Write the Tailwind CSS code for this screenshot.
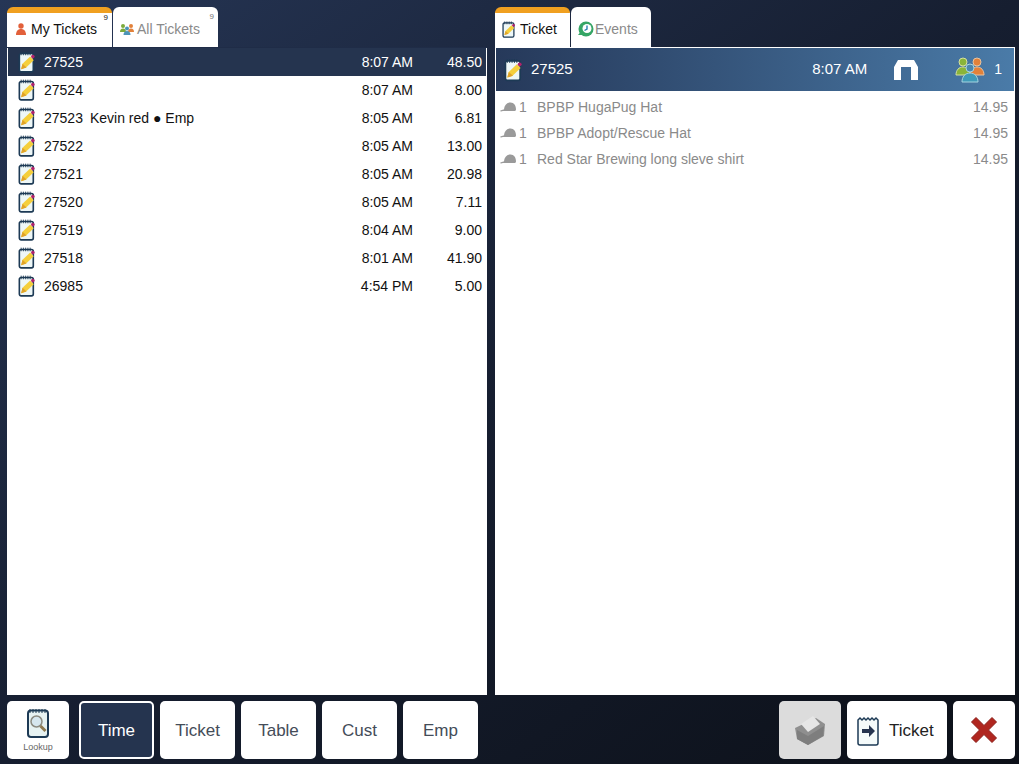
<!DOCTYPE html>
<html><head><meta charset="utf-8"><script src="https://cdn.jsdelivr.net/npm/@tailwindcss/browser@4"></script></head>
<body class="m-0">
<svg width="0" height="0" class="absolute">
<defs>
<symbol id="note" viewBox="0 0 20 24">
<rect x="1.500" y="2.500" width="15.500" height="20.500" rx="2" fill="#eef7f7" stroke="#1d3a55" stroke-width="1.800"/>
<path d="M3.500 .5v4M6 .5v4M8.500 .5v4M11 .5v4M13.500 .5v4" stroke="#1d3a55" stroke-width="1"/>
<path d="M3.500 20l1.500-6 8.500-8 4 4-8.500 8z" fill="#f5cf3c"/>
<path d="M3.500 20l1.500-6 4.500 4z" fill="#e0a32a"/>
<circle cx="16.500" cy="6" r="2" fill="#b0226a"/>
</symbol>
<symbol id="hat" viewBox="0 0 16 10">
<path d="M0 9c1-1 3-1.500 4-1.500C4.500 3 7 .5 10.500 .5S16 3.500 16 7.500c0 1-1 1.500-2 1.500H3C1.500 9.500 .5 9.500 0 9z" fill="#9a9a9a"/>
</symbol>
</defs>
</svg>
<div class="w-[1019px] h-[764px] overflow-hidden flex flex-col bg-gradient-to-br from-[#263656] via-[#161e30] to-[#0c1018] font-['Liberation_Sans',Arial,sans-serif] pt-[7px] pb-[5px]">
<div class="flex-1 flex min-h-0 pl-[7px] pr-[4px] gap-[8px]">
  <!-- left -->
  <div class="w-[480px] flex flex-col">
    <div class="flex h-[40px] gap-[1px]">
      <div class="relative w-[105px] bg-white rounded-t-[6px] border-t-[6px] border-[#f0a020] flex items-center pl-[9px] pb-[2px] text-[14px] text-[#111] gap-[5px]">
        <svg width="10" height="12" viewBox="0 0 10 12" class="shrink-0"><circle cx="5" cy="3" r="2.700" fill="#e2603a"/><path d="M0 12c0-4 2-6 5-6s5 2 5 6z" fill="#e2603a"/></svg>
        <span>My Tickets</span>
        <span class="absolute top-[1px] right-[4px] text-[8px] leading-[8px] text-[#222]">9</span>
      </div>
      <div class="relative w-[105px] bg-white rounded-t-[6px] flex items-center pl-[7px] pt-[4px] text-[14px] text-[#8a8a8a] gap-[3px]">
        <svg width="14" height="12" viewBox="0 0 14 12" class="shrink-0"><circle cx="3" cy="3" r="2" fill="#7cab3c"/><circle cx="11" cy="3" r="2" fill="#e2813a"/><path d="M0 9c0-2 1-3.500 3-3.500S6 7 6 9z" fill="#7cab3c"/><path d="M8 9c0-2 1-3.500 3-3.500S14 7 14 9z" fill="#e2813a"/><circle cx="7" cy="5.500" r="2" fill="#4d94b8"/><path d="M3.500 12c0-2.500 1.500-4 3.500-4s3.500 1.500 3.500 4z" fill="#4d94b8"/></svg>
        <span>All Tickets</span>
        <span class="absolute top-[6px] right-[4px] text-[8px] leading-[8px] text-[#777]">9</span>
      </div>
    </div>
    <div class="flex-1 bg-white border-t border-[#1f2c47] text-[14px] text-[#111]">
      <div class="h-[28px] flex items-center bg-[#25344f] text-white ml-px mr-px pl-[10px] pr-[4px]"><svg width="18" height="22" class="mr-[8px] shrink-0"><use href="#note"/></svg><span>27525</span><span class="ml-auto">8:07 AM</span><span class="w-[69px] text-right">48.50</span></div>
      <div class="h-[28px] flex items-center pl-[11px] pr-[5px]"><svg width="18" height="22" class="mr-[8px] shrink-0"><use href="#note"/></svg><span>27524</span><span class="ml-auto">8:07 AM</span><span class="w-[69px] text-right">8.00</span></div>
      <div class="h-[28px] flex items-center pl-[11px] pr-[5px]"><svg width="18" height="22" class="mr-[8px] shrink-0"><use href="#note"/></svg><span>27523</span><span class="ml-[7px]">Kevin red ● Emp</span><span class="ml-auto">8:05 AM</span><span class="w-[69px] text-right">6.81</span></div>
      <div class="h-[28px] flex items-center pl-[11px] pr-[5px]"><svg width="18" height="22" class="mr-[8px] shrink-0"><use href="#note"/></svg><span>27522</span><span class="ml-auto">8:05 AM</span><span class="w-[69px] text-right">13.00</span></div>
      <div class="h-[28px] flex items-center pl-[11px] pr-[5px]"><svg width="18" height="22" class="mr-[8px] shrink-0"><use href="#note"/></svg><span>27521</span><span class="ml-auto">8:05 AM</span><span class="w-[69px] text-right">20.98</span></div>
      <div class="h-[28px] flex items-center pl-[11px] pr-[5px]"><svg width="18" height="22" class="mr-[8px] shrink-0"><use href="#note"/></svg><span>27520</span><span class="ml-auto">8:05 AM</span><span class="w-[69px] text-right">7.11</span></div>
      <div class="h-[28px] flex items-center pl-[11px] pr-[5px]"><svg width="18" height="22" class="mr-[8px] shrink-0"><use href="#note"/></svg><span>27519</span><span class="ml-auto">8:04 AM</span><span class="w-[69px] text-right">9.00</span></div>
      <div class="h-[28px] flex items-center pl-[11px] pr-[5px]"><svg width="18" height="22" class="mr-[8px] shrink-0"><use href="#note"/></svg><span>27518</span><span class="ml-auto">8:01 AM</span><span class="w-[69px] text-right">41.90</span></div>
      <div class="h-[28px] flex items-center pl-[11px] pr-[5px]"><svg width="18" height="22" class="mr-[8px] shrink-0"><use href="#note"/></svg><span>26985</span><span class="ml-auto">4:54 PM</span><span class="w-[69px] text-right">5.00</span></div>
    </div>
  </div>
  <!-- right -->
  <div class="w-[520px] flex flex-col">
    <div class="flex h-[40px] gap-[1px]">
      <div class="w-[75px] bg-white rounded-t-[6px] border-t-[6px] border-[#f0a020] flex items-center pl-[7px] pb-[2px] text-[14px] text-[#111] gap-[4px]">
        <svg width="14" height="17" class="shrink-0"><use href="#note"/></svg><span>Ticket</span>
      </div>
      <div class="w-[80px] bg-white rounded-t-[6px] flex items-center pl-[7px] pt-[4px] text-[14px] text-[#8a8a8a] gap-[1px]">
        <svg width="16" height="16" viewBox="0 0 16 16" class="shrink-0"><circle cx="8" cy="8" r="7.500" fill="#35a565"/><circle cx="9" cy="7.500" r="4.500" fill="#fff"/><path d="M9 4.500v3.500l-2.500 1.500" stroke="#2a7fb0" stroke-width="1.400" fill="none"/><path d="M0 14l4-5 3 5z" fill="#35a565"/></svg>
        <span>Events</span>
      </div>
    </div>
    <div class="flex-1 bg-white border-t border-white text-[#8a8a8a] text-[14px]">
      <div class="h-[43px] flex items-center bg-gradient-to-r from-[#26395a] to-[#4a7ba8] text-white mx-px pl-[8px] pr-[12px] text-[15px] mb-[3px]">
        <svg width="19" height="24" class="mr-[8px] shrink-0"><use href="#note"/></svg><span>27525</span>
        <span class="ml-auto mr-[26px]">8:07 AM</span>
        <svg width="26" height="20" viewBox="0 0 26 20" class="mr-[36px] shrink-0"><path d="M5 0h16l4 7v13h-7V7H8v13H1V7z" fill="#fff"/></svg>
        <svg width="30" height="26" viewBox="0 0 30 26" class="mr-[9px] shrink-0" fill="none"><circle cx="8" cy="5" r="4" fill="#8ab43a" stroke="#d6e0a0"/><path d="M1 18c0-5 3-8 7-8s7 3 7 8z" fill="#8ab43a" stroke="#d6e0a0"/><circle cx="22" cy="5" r="4" fill="#e2813a" stroke="#e8c4a0"/><path d="M15 18c0-5 3-8 7-8s7 3 7 8z" fill="#e2813a" stroke="#e8c4a0"/><circle cx="15" cy="11" r="4" fill="#4a86ad" stroke="#a6d4e0"/><path d="M7 25c0-5 3-9 8-9s8 4 8 9z" fill="#3f9ab8" stroke="#a6d4e0"/></svg>
        <span class="text-[14px]">1</span>
      </div>
      <div class="h-[26px] flex items-center pl-[5px] pr-[7px]"><svg width="16" height="10" class="mr-[3px] shrink-0"><use href="#hat"/></svg><span class="w-[18px]">1</span><span>BPBP HugaPug Hat</span><span class="ml-auto">14.95</span></div>
      <div class="h-[26px] flex items-center pl-[5px] pr-[7px]"><svg width="16" height="10" class="mr-[3px] shrink-0"><use href="#hat"/></svg><span class="w-[18px]">1</span><span>BPBP Adopt/Rescue Hat</span><span class="ml-auto">14.95</span></div>
      <div class="h-[26px] flex items-center pl-[5px] pr-[7px]"><svg width="16" height="10" class="mr-[3px] shrink-0"><use href="#hat"/></svg><span class="w-[18px]">1</span><span>Red Star Brewing long sleve shirt</span><span class="ml-auto">14.95</span></div>
    </div>
  </div>
</div>
<!-- toolbar -->
<div class="h-[58px] mt-[6px] flex pl-[7px] pr-[4px] text-[17px] text-[#444c58]">
  <div class="w-[62px] bg-white rounded-[5px] flex flex-col items-center pt-[7px]">
    <svg width="24" height="30" viewBox="0 0 24 30"><rect x="2" y="2.500" width="20" height="26.500" rx="3" fill="#e6f2f2" stroke="#1d3a55" stroke-width="2"/><path d="M4 1v4M7 1v4M10 1v4M13 1v4M16 1v4M19 1v4" stroke="#1d3a55"/><circle cx="10.500" cy="13.500" r="5.500" fill="#d5e6ee" stroke="#8a8a80" stroke-width="1.500"/><path d="M14.500 18l5 5" stroke="#8f7a52" stroke-width="3"/></svg>
    <span class="text-[9px] leading-[10px] mt-[4px] text-[#666]">Lookup</span>
  </div>
  <div class="w-[75px] ml-[10px] pt-px bg-[#25344f] border-2 border-white rounded-[5px] flex items-center justify-center text-white">Time</div>
  <div class="w-[75px] ml-[6px] pt-px bg-white rounded-[5px] flex items-center justify-center">Ticket</div>
  <div class="w-[75px] ml-[6px] pt-px bg-white rounded-[5px] flex items-center justify-center">Table</div>
  <div class="w-[75px] ml-[6px] pt-px bg-white rounded-[5px] flex items-center justify-center">Cust</div>
  <div class="w-[75px] ml-[6px] pt-px bg-white rounded-[5px] flex items-center justify-center">Emp</div>
  <div class="w-[62px] ml-auto bg-[#dcdcdc] rounded-[5px] flex items-center justify-center">
    <svg width="32" height="30" viewBox="0 0 32 30"><path d="M1 13L22 3l9 6-1 12-16 9-11-6z" fill="#8f8f8f"/><path d="M7 9L19 1l7 8-12 8z" fill="#e6e6e6"/><path d="M3 15l11 6 16-10-1 10-15 9-11-6z" fill="#7e7e7e"/></svg>
  </div>
  <div class="w-[100px] ml-[6px] pt-px bg-white rounded-[5px] flex items-center pl-[10px] gap-[9px] text-[#222]">
    <svg width="23" height="30" viewBox="0 0 23 30"><path d="M1 4l2-2 2 2 2-2 2 2 2-2 2 2 2-2 2 2 2-2 2 2v23a2 2 0 0 1-2 2H3a2 2 0 0 1-2-2z" fill="#f4fafa" stroke="#1d3a55" stroke-width="1.500"/><path d="M5 13h7V9l6 6-6 6v-4H5z" fill="#25344f"/></svg>
    <span>Ticket</span>
  </div>
  <div class="w-[62px] ml-[6px] bg-white rounded-[5px] flex items-center justify-center">
    <svg width="28" height="28" viewBox="0 0 28 28"><path d="M1.500 6L6 1.500l8 8 8-8L26.500 6l-8 8 8 8-4.500 4.500-8-8-8 8L1.500 22l8-8z" fill="#b0261f" stroke="#8a1c16" stroke-linejoin="round"/></svg>
  </div>
</div>
</div>
</body></html>
